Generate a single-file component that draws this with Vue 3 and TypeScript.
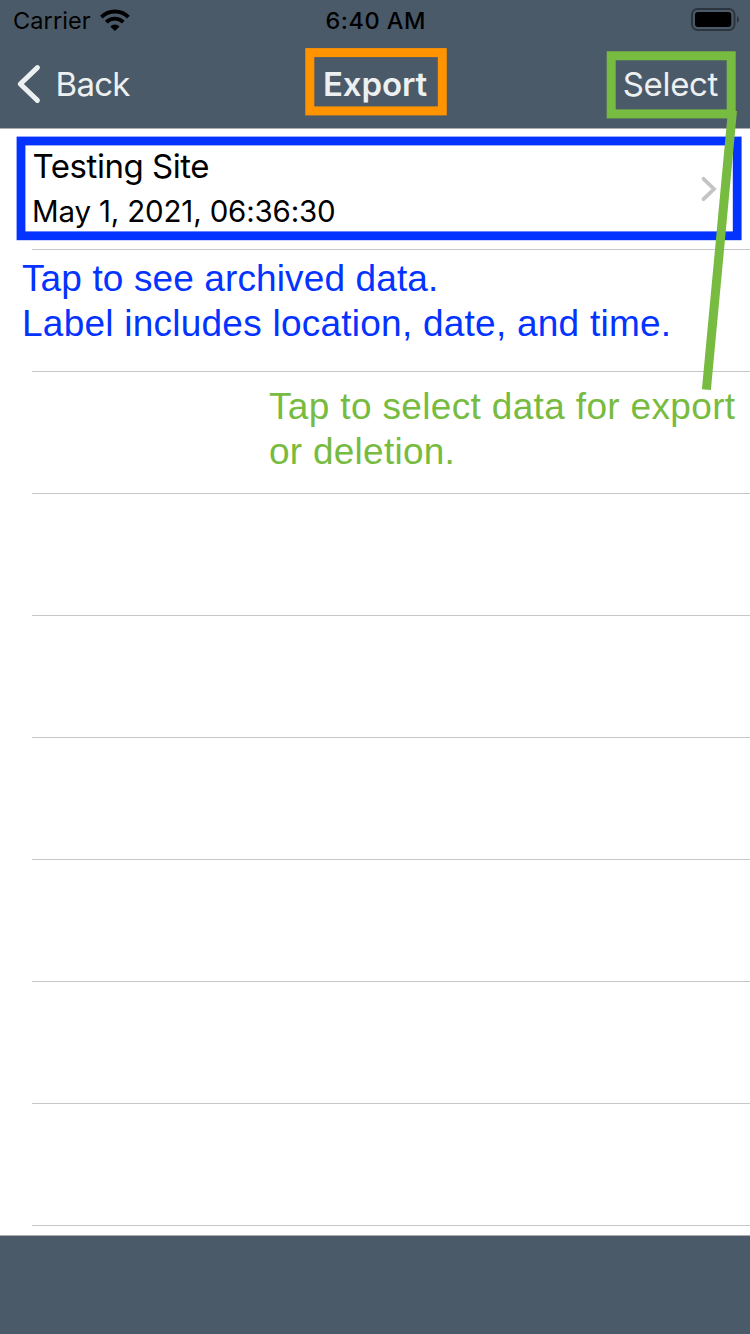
<script setup lang="ts">
const emptyRows: number = 8
</script>

<template>
  <main class="screen">
    <header class="header">
      <div class="status">
        <div class="carrier">
          <span class="carrier-name">Carrier</span>
          <svg class="wifi" width="30" height="22" viewBox="0 0 30 22">
            <g fill="none" stroke="#000" stroke-width="3.9">
              <path d="M1.4 8.1a19 19 0 0 1 27 0" />
              <path d="M6.3 13.1a12.1 12.1 0 0 1 17 0" />
            </g>
            <path d="M14.9 22 10.3 17.5a6.5 6.5 0 0 1 9.2 0z" />
          </svg>
        </div>
        <span class="clock">6:40 AM</span>
        <svg class="battery" width="48" height="24" viewBox="0 0 48 24">
          <rect x="1" y="1" width="42.5" height="21" rx="5.5" fill="none" stroke="#2c353d" stroke-width="2" />
          <rect x="4" y="4" width="36.3" height="15" rx="3" />
          <path d="M46 8.2c2.6 1.2 2.6 5.6 0 6.8z" fill="#2c353d" />
        </svg>
      </div>
      <nav class="nav">
        <div class="back">
          <svg width="26" height="42" viewBox="0 0 26 42">
            <path d="M21.4 4.6 4.3 21 21.4 37.4" fill="none" stroke="#ecf0f1" stroke-width="5" stroke-linecap="round" stroke-linejoin="round" />
          </svg>
          <span class="back-label">Back</span>
        </div>
        <h1 class="title">Export</h1>
        <span class="select">Select</span>
      </nav>
    </header>

    <section class="list">
      <article class="row entry">
        <div class="entry-text">
          <div class="site">Testing Site</div>
          <div class="date">May 1, 2021, 06:36:30</div>
        </div>
        <svg class="chevron" width="18" height="28" viewBox="0 0 18 28">
          <path d="M3.5 3.8 14 14 3.5 24.2" fill="none" stroke="#c4c4c6" stroke-width="3.8" stroke-linecap="round" stroke-linejoin="miter" />
        </svg>
      </article>
      <div v-for="n in emptyRows" :key="n" class="row"></div>
    </section>

    <footer class="toolbar"></footer>

    <svg class="marks" width="750" height="1334" viewBox="0 0 750 1334" fill="none">
      <rect x="309.8" y="52.6" width="132.5" height="58.3" stroke="#ff9300" stroke-width="9" />
      <rect x="21" y="141" width="716.2" height="94.8" stroke="#0433ff" stroke-width="8.8" />
      <rect x="611.2" y="55.8" width="120" height="58.1" stroke="#77bb41" stroke-width="9" />
      <path d="M732.5 110.6 706.4 389.7" stroke="#77bb41" stroke-width="9" />
    </svg>
    <p class="note blue"><span class="n1">Tap to see archived data.</span><br /><span class="n2">Label includes location, date, and time.</span></p>
    <p class="note green"><span class="n3">Tap to select data for export</span><br /><span class="n4">or deletion.</span></p>
  </main>
</template>

<style>
body {
  margin: 0;
}
</style>

<style scoped>
.screen {
  position: relative;
  display: flex;
  flex-direction: column;
  width: 750px;
  height: 1334px;
  overflow: hidden;
  background: #fff;
  font-family: Inter, "Liberation Sans", sans-serif;
  white-space: nowrap;
}
.header {
  box-sizing: border-box;
  height: 129px;
  background: #4b5a68;
  border-bottom: 1px solid #aaaeb1;
}
.status,
.nav {
  display: grid;
  grid-template-columns: 1fr auto 1fr;
}
.status {
  height: 40px;
  line-height: 41px;
  font-size: 23.5px;
  color: #000;
}
.carrier {
  display: flex;
  padding-left: 13px;
}
.carrier-name {
  width: 87px;
  letter-spacing: 0.1px;
}
.wifi {
  margin-top: 9px;
}
.clock {
  padding-left: 1.5px;
  font-weight: 500;
  letter-spacing: 0.5px;
}
.battery {
  justify-self: end;
  margin: 8px 11px 0 0;
}
.nav {
  height: 88px;
  line-height: 88px;
  font-size: 33px;
  color: #ecf0f1;
}
.back {
  display: flex;
  align-items: center;
  padding-left: 16px;
}
.back-label {
  margin-left: 13.5px;
  letter-spacing: -0.7px;
}
.title {
  margin: 0;
  font-size: 33px;
  font-weight: 600;
  letter-spacing: -0.1px;
}
.select {
  justify-self: end;
  margin-right: 32px;
  letter-spacing: -0.35px;
}
.list {
  flex: none;
  height: 1106px;
}
.row {
  box-sizing: border-box;
  height: 122px;
  margin-left: 32px;
  border-bottom: 1px solid #c6c6c8;
}
.entry {
  display: flex;
  justify-content: space-between;
  height: 121px;
  padding: 17px 32px 0 0;
  color: #000;
}
.site {
  padding-left: 0.5px;
  font-size: 33px;
  line-height: 40px;
  letter-spacing: -0.45px;
}
.date {
  margin-top: 5px;
  font-size: 29.5px;
  line-height: 40px;
  letter-spacing: -0.17px;
}
.chevron {
  margin-top: 29px;
}
.toolbar {
  flex: 1;
  background: #4b5a68;
  border-top: 1px solid #aaaeb1;
}
.marks {
  position: absolute;
  top: 0;
  left: 0;
}
.note {
  position: absolute;
  margin: 0;
  font-family: "Liberation Sans", Arial, sans-serif;
  font-size: 37px;
  line-height: 45px;
}
.blue {
  top: 256px;
  left: 22px;
  color: #0433ff;
}
.green {
  top: 384px;
  left: 269px;
  color: #77bb41;
}
.n1 {
  letter-spacing: 0.12px;
}
.n2 {
  letter-spacing: 0.24px;
}
.n3 {
  letter-spacing: 0.34px;
}
.n4 {
  letter-spacing: 0.25px;
}
</style>
